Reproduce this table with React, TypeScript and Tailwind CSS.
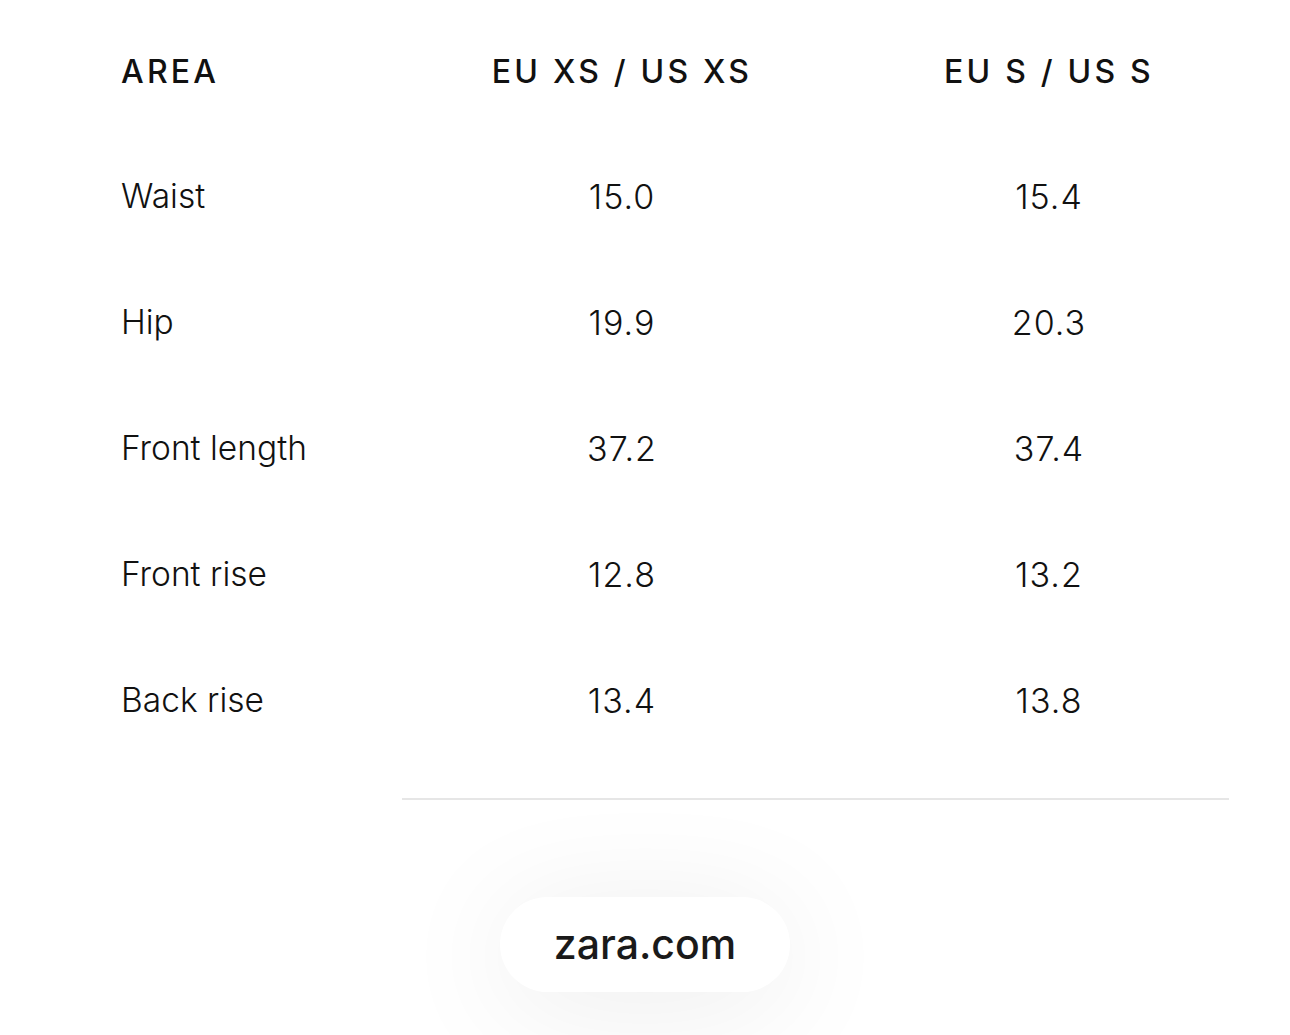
import React from "react";

const rows: [string, string, string][] = [
  ["Waist", "15.0", "15.4"],
  ["Hip", "19.9", "20.3"],
  ["Front length", "37.2", "37.4"],
  ["Front rise", "12.8", "13.2"],
  ["Back rise", "13.4", "13.8"],
];

export default function App() {
  return (
    <div
      className="w-[1290px] h-[1035px] bg-white overflow-hidden text-[#111]"
      style={{ fontFamily: "Inter, 'Noto Sans', sans-serif" }}
    >
      <div className="pl-[121px] pt-[11px]">
        <div className="grid grid-cols-[281px_440px_414px]">
          <div className="h-[122px] flex items-center text-[32px] font-medium tracking-[0.1em]">AREA</div>
          <div className="h-[122px] flex items-center justify-center text-[32px] font-medium tracking-[0.1em]">EU XS / US XS</div>
          <div className="h-[122px] flex items-center justify-center text-[32px] font-medium tracking-[0.1em]">EU S / US S</div>
          {rows.map(([a, b, c]) => (
            <React.Fragment key={a}>
              <div className="h-[126px] flex items-center text-[33.5px] font-light">{a}</div>
              <div className="h-[126px] flex items-center justify-center text-[34px] font-light tracking-[0.03em]">{b}</div>
              <div className="h-[126px] flex items-center justify-center text-[34px] font-light tracking-[0.03em]">{c}</div>
            </React.Fragment>
          ))}
        </div>
      </div>
      <div className="ml-[402px] mt-[35px] w-[827px] h-[2px] bg-[#e6e6e6]" />
      <div className="flex justify-center mt-[97px]">
        <div className="w-[290px] h-[95px] rounded-full bg-white shadow-[0_12px_120px_rgba(0,0,0,0.08)] flex items-center justify-center text-[41px] font-medium text-[#1a1a1a]">
          zara.com
        </div>
      </div>
    </div>
  );
}
